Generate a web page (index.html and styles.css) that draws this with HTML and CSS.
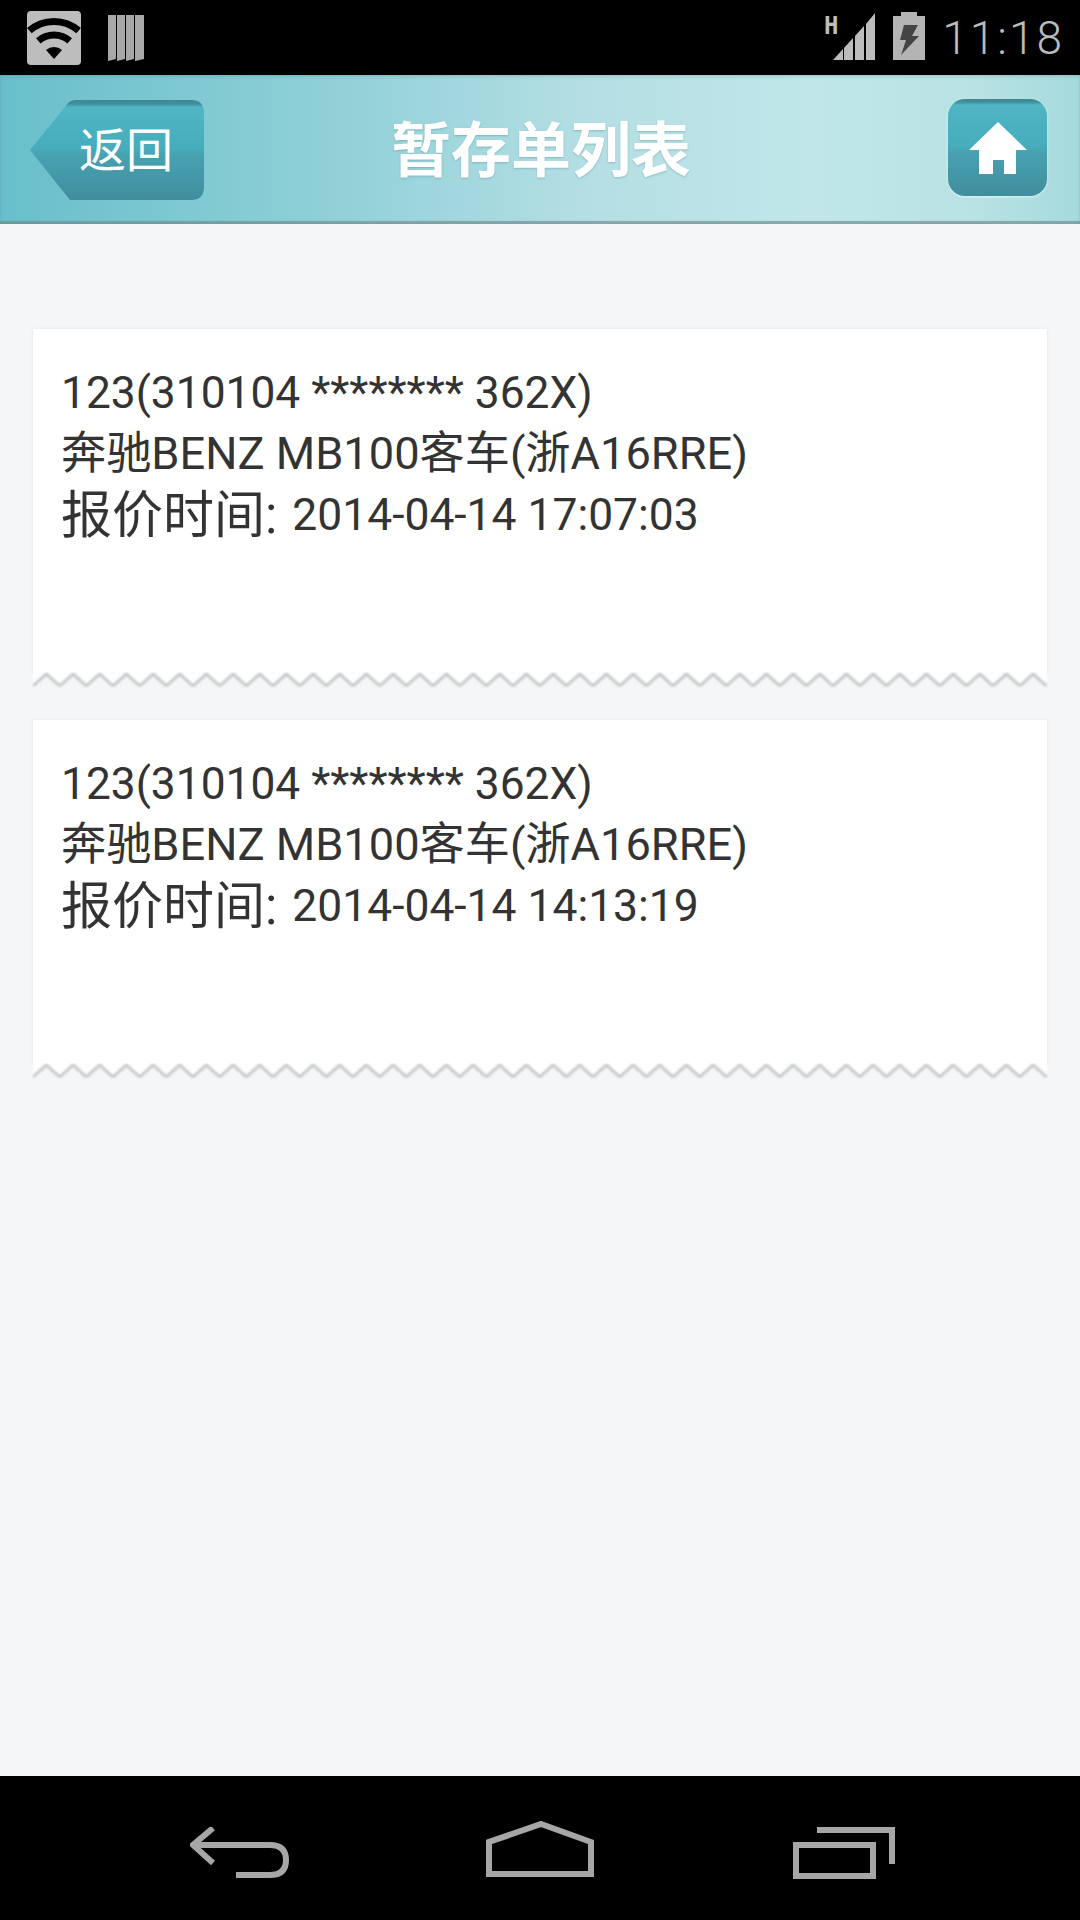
FILE: index.html
```html
<!DOCTYPE html>
<html lang="zh-CN">
<head>
    <meta charset="UTF-8">
    <meta name="viewport" content="width=device-width, initial-scale=1.0">
    <title>暂存单列表</title>
    <link rel="stylesheet" href="styles.css">
</head>
<body>
    <div class="status-bar">
        <svg class="icon-wifi" width="54" height="54" viewBox="0 0 54 54">
            <rect width="54" height="54" rx="4" fill="#bdbdbd"/>
            <path d="M2.4 19.7A37.5 37.5 0 0 1 51.6 19.7" fill="none" stroke="#000" stroke-width="7"/>
            <path d="M11.3 29.9A24 24 0 0 1 42.7 29.9" fill="none" stroke="#000" stroke-width="7"/>
            <path d="M27 48L19 39A12 12 0 0 1 35 39Z" fill="#000"/>
        </svg>
        <svg class="icon-bars" width="37" height="46" viewBox="0 0 37 46">
            <path d="M0 0H8V44L0 46Z" fill="#a8a8a8"/>
            <path d="M9 0H17V44L9 46Z" fill="#a8a8a8"/>
            <path d="M18 0H26V44L18 46Z" fill="#a8a8a8"/>
            <path d="M27 0H36V44L27 46Z" fill="#a8a8a8"/>
        </svg>
        <div class="status-right">
            <svg class="icon-signal" width="52" height="50" viewBox="0 0 52 50">
                <text x="-1" y="21" class="signal-h">H</text>
                <path d="M8 47L18 36V47Z" fill="#bdbdbd"/>
                <path d="M19 35L28 25V47H19Z" fill="#bdbdbd"/>
                <path d="M30 23L39 13V47H30Z" fill="#bdbdbd"/>
                <path d="M41 11L50 0V47H41Z" fill="#bdbdbd"/>
            </svg>
            <svg class="icon-battery" width="32" height="48" viewBox="0 0 32 48">
                <path d="M8 0H24V4H32V48H0V4H8Z" fill="#b4b4b4"/>
                <path d="M11 13H25L19 24H26L8 43L13 28H7Z" fill="#444"/>
            </svg>
            <span class="clock">11:18</span>
        </div>
    </div>

    <div class="header">
        <div class="back-btn">
            <svg class="back-shape" width="176" height="103" viewBox="0 0 176 103">
                <defs>
                    <linearGradient id="btnFill" x1="0" y1="0" x2="0" y2="1">
                        <stop offset="0" stop-color="#3d8793"/>
                        <stop offset="0.04" stop-color="#3f8f9c"/>
                        <stop offset="0.07" stop-color="#50b5c4"/>
                        <stop offset="0.48" stop-color="#45adbc"/>
                        <stop offset="0.56" stop-color="#48a1af"/>
                        <stop offset="1" stop-color="#3f8e9e"/>
                    </linearGradient>
                </defs>
                <path d="M1 51L40 3Q43 1 47 1H162Q175 1 175 14V88Q175 101 162 101H41Z" fill="url(#btnFill)"/>
            </svg>
            <span class="back-label">返回</span>
        </div>
        <div class="title">暂存单列表</div>
        <div class="home-btn">
            <svg width="58" height="53" viewBox="0 0 58 53">
                <path d="M29 0L58 28H47V52H35V38H24V52H10V28H0Z" fill="#fff"/>
            </svg>
        </div>
    </div>

    <div class="content">
        <div class="card">
            <div class="card-body">
                <div class="line line-id">123(310104 ******** 362X)</div>
                <div class="line line-car">奔驰BENZ MB100客车(浙A16RRE)</div>
                <div class="line line-time"><span class="label">报价时间:</span> 2014-04-14 17:07:03</div>
            </div>
            <svg class="zigzag" width="1014" height="16">
                <defs>
                    <pattern id="zig" width="26.67" height="16" patternUnits="userSpaceOnUse">
                        <path d="M0 0H26.67V13L13.33 1L0 13Z" fill="#fff"/>
                        <path d="M0 13L13.33 1L26.67 13" fill="none" stroke="#c6c7c7" stroke-width="3"/>
                    </pattern>
                </defs>
                <rect width="1014" height="16" fill="url(#zig)"/>
            </svg>
        </div>
        <div class="card">
            <div class="card-body">
                <div class="line line-id">123(310104 ******** 362X)</div>
                <div class="line line-car">奔驰BENZ MB100客车(浙A16RRE)</div>
                <div class="line line-time"><span class="label">报价时间:</span> 2014-04-14 14:13:19</div>
            </div>
            <svg class="zigzag" width="1014" height="16">
                <rect width="1014" height="16" fill="url(#zig)"/>
            </svg>
        </div>
    </div>

    <div class="nav-bar">
        <svg class="nav-back" width="100" height="52" viewBox="0 0 100 52">
            <path d="M23 1L3 18L23 36" fill="none" stroke="#a6a6a6" stroke-width="6"/>
            <path d="M4 18H80Q96 18 96 33Q96 48 80 48H46" fill="none" stroke="#a6a6a6" stroke-width="6"/>
        </svg>
        <svg class="nav-home" width="110" height="58" viewBox="0 0 110 58">
            <path d="M3 53V21L55 3L105 21V53Z" fill="none" stroke="#a6a6a6" stroke-width="6"/>
        </svg>
        <svg class="nav-recent" width="103" height="52" viewBox="0 0 103 52">
            <rect x="3" y="18" width="77" height="31" fill="none" stroke="#a6a6a6" stroke-width="6"/>
            <path d="M24 3H99V37" fill="none" stroke="#a6a6a6" stroke-width="6"/>
        </svg>
    </div>
</body>
</html>
```

FILE: styles.css
```css
body {
    margin: 0;
    width: 1080px;
    height: 1920px;
    display: flex;
    flex-direction: column;
    background-color: #f5f6f8;
    font-family: Roboto, "Noto Sans CJK SC", sans-serif;
    overflow: hidden;
}

/* status bar */
.status-bar {
    height: 75px;
    flex: none;
    background-color: #000;
    display: flex;
    align-items: flex-start;
    padding: 11px 16px 0 27px;
    box-sizing: border-box;
}
.icon-bars {
    margin: 4px 0 0 27px;
}
.status-right {
    margin-left: auto;
    display: flex;
    align-items: flex-start;
}
.icon-signal {
    margin: 2px 16px 0 0;
}
.icon-battery {
    margin: 1px 17px 0 0;
}
.signal-h {
    font-family: "DejaVu Sans Mono", monospace;
    font-weight: bold;
    font-size: 24px;
    fill: #bdbdbd;
}
.clock {
    color: #bbb;
    font-weight: 300;
    font-size: 46px;
    line-height: 54px;
    letter-spacing: 2px;
}

/* header */
.header {
    height: 149px;
    flex: none;
    box-sizing: border-box;
    display: flex;
    align-items: flex-start;
    justify-content: space-between;
    padding: 24px 33px 0 29px;
    background: linear-gradient(90deg, #68bfcb 0%, #8fd0d7 30%, #b5dfe4 55%, #c0e6e9 75%, #b9e2e4 90%, #a5dadd 100%);
    box-shadow: inset 0 2px 3px rgba(90, 130, 135, 0.25), inset 0 -3px 1px rgba(110, 135, 135, 0.65);
}
.back-btn {
    position: relative;
    width: 176px;
    height: 103px;
    display: flex;
    align-items: center;
    justify-content: flex-end;
}
.back-shape {
    position: absolute;
    left: 0;
    top: 0;
}
.back-label {
    position: relative;
    width: 126px;
    color: #fff;
    font-size: 47px;
    line-height: 1;
    text-align: left;
}
.title {
    color: #fff;
    font-size: 60px;
    font-weight: 700;
    line-height: 106px;
    margin-right: 71px;
    text-shadow: 0 1px 2px rgba(70, 130, 140, 0.4);
}
.home-btn {
    width: 99px;
    height: 97px;
    box-sizing: border-box;
    padding-top: 23px;
    border-radius: 17px;
    display: flex;
    justify-content: center;
    align-items: flex-start;
    background: linear-gradient(180deg, #3d8793 0, #3f8f9c 3px, #50b5c4 6px, #45adbc 48%, #48a1af 56%, #3f8e9e 100%);
    box-shadow: 0 1px 3px rgba(255, 255, 255, 0.6);
}

/* list */
.content {
    flex: 1;
    display: flex;
    flex-direction: column;
    gap: 31px;
    padding: 105px 33px 0;
}
.card {
    display: flex;
    flex-direction: column;
}
.card-body {
    height: 344px;
    box-sizing: border-box;
    padding: 34px 28px 0;
    background-color: #fff;
    box-shadow: 0 0 3px rgba(0, 0, 0, 0.08);
    clip-path: inset(-4px -4px 0 -4px);
}
.zigzag {
    display: block;
    filter: blur(0.8px);
}
.line {
    color: #333;
    line-height: 61px;
    white-space: nowrap;
}
.line-id {
    font-size: 44.3px;
}
.line-car {
    font-size: 45.2px;
    margin-top: -1px;
    margin-bottom: 1px;
}
.line-time {
    font-size: 44.4px;
}
.label {
    font-size: 51px;
    line-height: 1;
    margin-right: 4px;
    vertical-align: -3px;
}

/* bottom nav */
.nav-bar {
    height: 144px;
    flex: none;
    background-color: #000;
    display: flex;
    align-items: flex-start;
    box-sizing: border-box;
    padding: 45px 0 0 190px;
}
.nav-back {
    margin-top: 6px;
}
.nav-home {
    margin-left: 196px;
}
.nav-recent {
    margin: 6px 0 0 197px;
}
```
